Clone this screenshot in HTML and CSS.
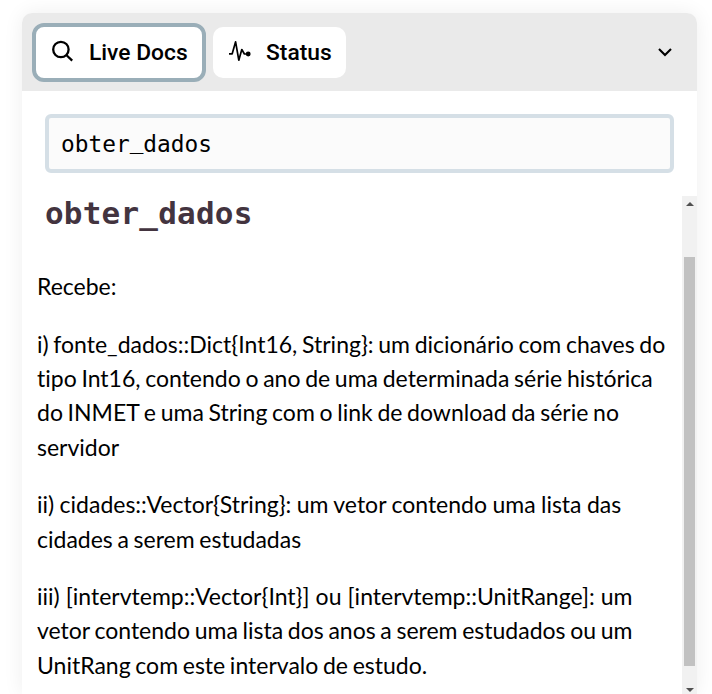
FILE: index.html
```
<!DOCTYPE html>
<html lang="pt">
<head>
<meta charset="utf-8">
<title>Live Docs</title>
<link rel="stylesheet" href="styles.css">
</head>
<body>
<main class="panel">
  <header class="tabs">
    <button class="tab active">
      <svg class="icon search-icon" viewBox="0 0 24 24"><circle cx="10.9" cy="9.5" r="7.7"/><path d="M16.3 15l5.9 5.6"/></svg>
      <span>Live Docs</span>
    </button>
    <button class="tab status">
      <svg class="icon pulse-icon" viewBox="0 0 24 24"><path d="M2 13.8h3.2L8.6 1.8l3.2 18.4 3-10.7 2.6 4.5h2"/><circle cx="21.2" cy="14" r="1.6"/></svg>
      <span>Status</span>
    </button>
    <svg class="chevron" viewBox="0 0 16 16"><path d="M2 5l6 6 6-6"/></svg>
  </header>
  <div class="search"><div class="field" role="textbox" contenteditable="true" spellcheck="false">obter<span class="underscore">_</span>dados</div></div>
  <section class="docs">
    <article class="content">
      <h1>obter_dados</h1>
      <p>Recebe:</p>
      <p><span class="dense">i) fonte_dados::Dict{Int16, String}: um dicionário com chaves do</span><br><span class="dense">tipo Int16, contendo o ano de uma determinada série histórica</span><br><span class="dense">do INMET e uma String com o link de download da série no</span><br>servidor</p>
      <p><span class="regular">ii) cidades::Vector{String}: um vetor contendo uma lista das</span><br><span class="dense">cidades a serem estudadas</span></p>
      <p><span class="loose">iii) [intervtemp::Vector{Int}] ou [intervtemp::UnitRange]: um</span><br><span class="dense">vetor contendo uma lista dos anos a serem estudados ou um</span><br><span class="dense">UnitRang com este intervalo de estudo.</span></p>
    </article>
    <div class="scrollbar"><i class="arrow up"></i><i class="thumb"></i><i class="arrow down"></i></div>
  </section>
</main>
</body>
</html>
```
FILE: styles.css
```
* { box-sizing: border-box; }
body { margin: 0; height: 694px; overflow: hidden; background: #fff; padding: 13px 15px 0 22px; }
.panel { height: 681px; border-radius: 10px 10px 0 0; background: #fff; box-shadow: 0 0 20px rgba(0,0,0,.07); }
.tabs { height: 78px; display: flex; align-items: center; padding: 0 24px 0 10px; background: #eaeaea; border-radius: 10px 10px 0 0; }
.tab { display: flex; align-items: center; border: 0; background: #fff; border-radius: 10px; height: 51px; padding: 0 14px; font: 500 22.8px Roboto, sans-serif; color: #000; white-space: nowrap; }
.active { width: 174px; height: 59px; border: 4px solid #9aaeb8; border-radius: 12px; margin-right: 7px; }
.status { width: 133px; }
.icon { width: 24px; height: 24px; margin-right: 15px; flex: none; fill: none; stroke: #000; stroke-width: 2.3; }
.pulse-icon { stroke-width: 1.7; stroke-linejoin: round; }
.pulse-icon circle { fill: #000; }
.chevron { width: 16px; height: 16px; margin-left: auto; fill: none; stroke: #000; stroke-width: 2.1; }
.search { padding: 23px 23px 0; height: 105px; }
.field { width: 629px; height: 59px; border: 4px solid #d5dfe6; border-radius: 6px; background: #fbfbfb; padding: 0 12px; font: 22.8px/53px "DejaVu Sans Mono", monospace; color: #000; outline: 0; }
.underscore { line-height: 1; vertical-align: 4px; }
.docs { display: flex; height: 498px; }
.content { flex: 1; min-width: 0; height: 498px; overflow: hidden; padding-left: 15px; font: 23px/34.4px Lato, sans-serif; color: #000; white-space: nowrap; font-variant-ligatures: none; }
.dense { word-spacing: -1.2px; }
.regular { word-spacing: -.5px; }
.loose { word-spacing: .2px; }
h1 { margin: 0 0 38.1px 8px; font: bold 31px/35px "DejaVu Sans Mono", monospace; letter-spacing: .2px; color: #43343f; }
p { margin: 0 0 23px; }
.scrollbar { width: 15px; background: #f1f1f1; display: flex; flex-direction: column; align-items: center; }
.thumb { flex: none; width: 11px; height: 409px; margin: 51px 0 22px; background: #c1c1c1; }
.arrow { flex: none; border: 4px solid transparent; }
.up { border-top: 0; border-bottom-color: #505050; margin-top: 6px; }
.down { border-bottom: 0; border-top-color: #505050; }
```
